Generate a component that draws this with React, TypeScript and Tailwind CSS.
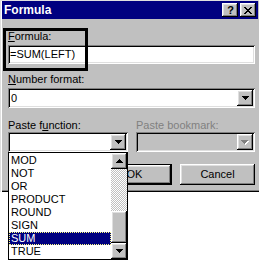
import React from "react";

const raised =
  "shadow-[inset_-1px_-1px_#000,inset_1px_1px_#fff,inset_-2px_-2px_#808080,inset_2px_2px_#dfdfdf]";
const sunken =
  "shadow-[inset_1px_1px_#808080,inset_-1px_-1px_#fff,inset_2px_2px_#000,inset_-2px_-2px_#dfdfdf]";

function DownTri({ color = "#000" }: { color?: string }) {
  return (
    <svg width="7" height="4" viewBox="0 0 7 4" shapeRendering="crispEdges">
      <path d="M0 0h7v1H0zM1 1h5v1H1zM2 2h3v1H2zM3 3h1v1H3z" fill={color} />
    </svg>
  );
}

function UpTri() {
  return (
    <svg width="7" height="4" viewBox="0 0 7 4" shapeRendering="crispEdges">
      <path d="M3 0h1v1H3zM2 1h3v1H2zM1 2h5v1H1zM0 3h7v1H0z" fill="#000" />
    </svg>
  );
}

function DisabledDownTri() {
  return (
    <svg width="8" height="5" viewBox="0 0 8 5" shapeRendering="crispEdges">
      <path d="M1 1h7v1H1zM2 2h5v1H2zM3 3h3v1H3zM4 4h1v1H4z" fill="#fff" />
      <path d="M0 0h7v1H0zM1 1h5v1H1zM2 2h3v1H2zM3 3h1v1H3z" fill="#808080" />
    </svg>
  );
}

function CloseGlyph() {
  return (
    <svg width="8" height="7" viewBox="0 0 8 7" shapeRendering="crispEdges">
      <path
        d="M0 0h2v1H0zM6 0h2v1H6zM1 1h2v1H1zM5 1h2v1H5zM2 2h4v1H2zM3 3h2v1H3zM2 4h4v1H2zM1 5h2v1H1zM5 5h2v1H5zM0 6h2v1H0zM6 6h2v1H6z"
        fill="#000"
      />
    </svg>
  );
}

function Combo({
  disabled = false,
  value = "",
  className = "",
}: {
  disabled?: boolean;
  value?: string;
  className?: string;
}) {
  return (
    <div
      className={`h-[20px] flex p-[2px] ${sunken} ${
        disabled ? "bg-[#c0c0c0]" : "bg-white"
      } ${className}`}
    >
      <div className="flex-1 pl-[1px] leading-[16px] overflow-hidden whitespace-nowrap">
        {value}
      </div>
      <div
        className={`w-[16px] h-[16px] flex items-center justify-center bg-[#c0c0c0] ${raised}`}
      >
        {disabled ? <DisabledDownTri /> : <DownTri />}
      </div>
    </div>
  );
}

const items = ["MOD", "NOT", "OR", "PRODUCT", "ROUND", "SIGN", "SUM", "TRUE"];

export default function App() {
  return (
    <div className="relative w-[259px] h-[262px] bg-white overflow-hidden font-['Liberation_Sans',Arial,sans-serif] text-[11px] leading-[13px] text-black">
      {/* Dialog */}
      <div className="h-[192px] bg-[#c0c0c0] flex flex-col shadow-[inset_1px_1px_#dfdfdf,inset_2px_0_#fff,inset_0_-1px_#000,inset_0_-2px_#808080]">
        {/* Title bar */}
        <div className="mt-[1px] ml-[2px] mr-[1px] h-[18px] bg-[#000080] flex items-center justify-between pl-[2px] pr-[2px]">
          <span className="text-white font-bold text-[12px] leading-[18px]">Formula</span>
          <div className="flex gap-[2px]">
            <div
              className={`w-[16px] h-[14px] bg-[#c0c0c0] flex items-center justify-center ${raised}`}
            >
              <span className="font-bold text-[11px] leading-[12px] pl-[1px]">?</span>
            </div>
            <div
              className={`w-[16px] h-[14px] bg-[#c0c0c0] flex items-center justify-center ${raised}`}
            >
              <CloseGlyph />
            </div>
          </div>
        </div>

        {/* Body */}
        <div className="flex flex-col pl-[8px] pr-[4px]">
          <div className="mt-[11px] h-[13px]">
            <span className="underline">F</span>ormula:
          </div>
          <div className={`mt-[2px] h-[19px] bg-white p-[2px] ${sunken}`}>
            <div className="pl-[0px] leading-[15px]">=SUM(LEFT)</div>
          </div>

          <div className="mt-[9px] h-[13px]">
            <span className="underline">N</span>umber format:
          </div>
          <Combo className="mt-[2px]" value="0" />

          <div className="mt-[11px] flex h-[13px]">
            <div className="w-[120px]">
              Paste f<span className="underline">u</span>nction:
            </div>
            <div className="ml-[8px] text-[#808080]">Paste bookmark:</div>
          </div>
          <div className="flex">
            <Combo className="w-[120px]" />
            <Combo className="flex-1 ml-[8px]" disabled />
          </div>

          <div className="mt-[12px] flex justify-end gap-[8px]">
            <div className="w-[75px] h-[21px] border border-black">
              <div
                className={`h-full bg-[#c0c0c0] flex items-center justify-center ${raised}`}
              >
                OK
              </div>
            </div>
            <div
              className={`w-[75px] h-[21px] bg-[#c0c0c0] flex items-center justify-center ${raised}`}
            >
              Cancel
            </div>
          </div>
        </div>
      </div>

      {/* Annotation frame */}
      <div className="absolute left-[3px] top-[28px] w-[85px] h-[43px] border-[3px] border-black" />

      {/* Dropdown list */}
      <div className="absolute left-[8px] top-[152px] w-[120px] h-[108px] border border-black bg-white flex">
        <div className="flex-1 pt-[1px] flex flex-col">
          {items.map((it) => (
            <div
              key={it}
              className={`h-[13px] pl-[1px] leading-[11px] border border-dotted ${
                it === "SUM"
                  ? "bg-[#000080] text-white border-[#ffff80]"
                  : "border-transparent"
              }`}
            >
              {it}
            </div>
          ))}
        </div>
        <div className="w-[16px] flex flex-col">
          <div
            className={`h-[16px] bg-[#c0c0c0] flex items-center justify-center ${raised}`}
          >
            <UpTri />
          </div>
          <div className="flex-1 bg-[repeating-conic-gradient(#c0c0c0_0_25%,#fff_0_50%)] bg-[length:2px_2px]" />
          <div className={`h-[32px] bg-[#c0c0c0] ${raised}`} />
          <div
            className={`h-[16px] bg-[#c0c0c0] flex items-center justify-center ${raised}`}
          >
            <DownTri />
          </div>
        </div>
      </div>
    </div>
  );
}
